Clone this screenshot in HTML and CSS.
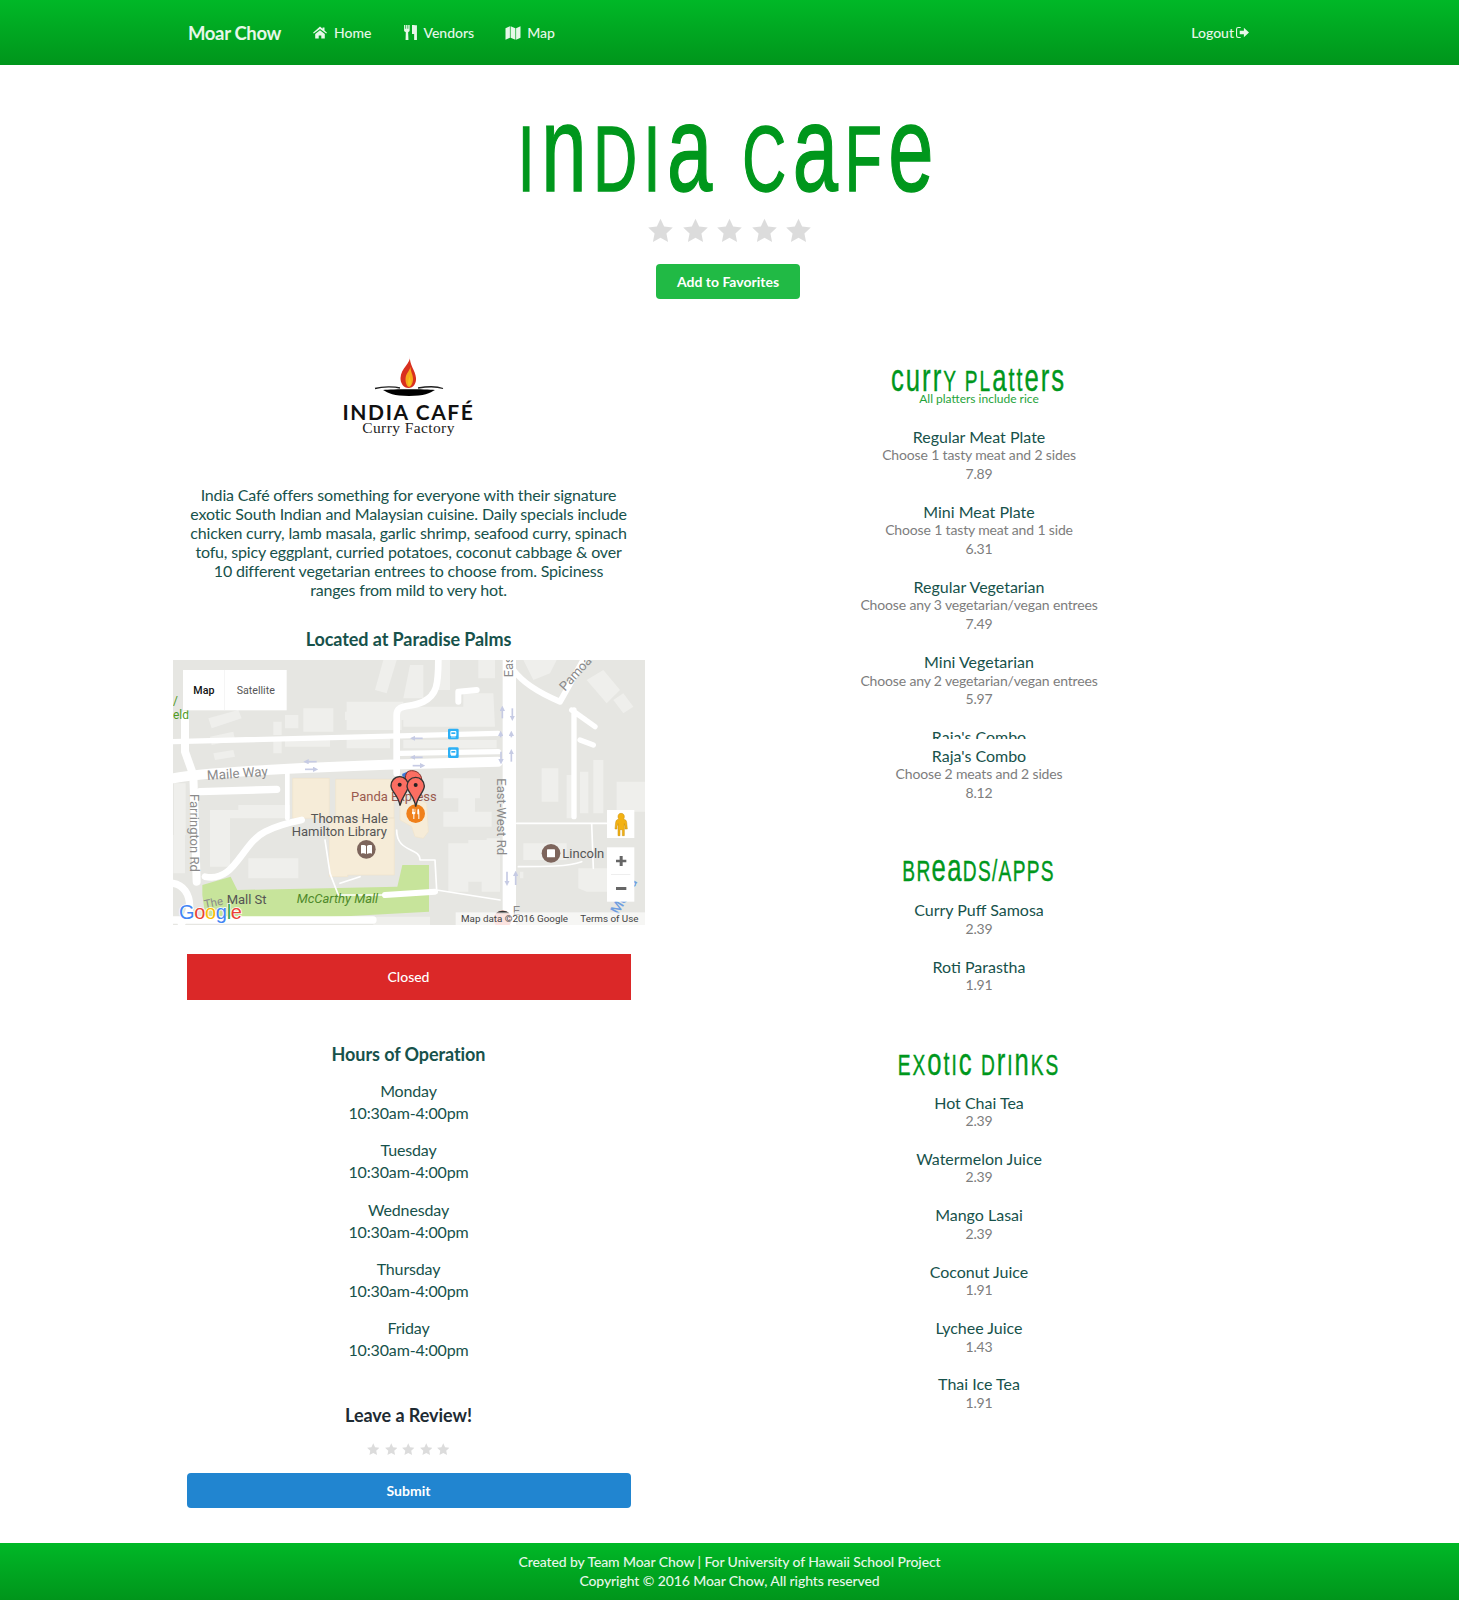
FILE: index.html
```html
<!DOCTYPE html>
<html lang="en">
<head>
<meta charset="utf-8">
<title>India Cafe</title>
<link rel="stylesheet" href="styles.css">
</head>
<body>
<svg class="defs" width="0" height="0" aria-hidden="true">
  <symbol id="star" viewBox="0 0 24 24"><path d="M12 .6l3.5 7.6 8.3 1-6.1 5.7 1.6 8.2L12 19l-7.3 4.1 1.6-8.2L.2 9.2l8.3-1z"/></symbol>
</svg>
<nav class="topbar">
  <a class="brand">Moar Chow</a>
  <a class="navlink nav-home"><svg class="ico" viewBox="0 0 14 12"><path d="M7 0l2.600 2.300V1h1.900v3l2.500 2.200-.8.9L7 2.600 .8 7.100 0 6.200zM2.200 7.400L7 3.800l4.800 3.600V12H8.300V8.900H5.700V12H2.200z"/></svg>Home</a>
  <a class="navlink nav-vendors"><svg class="ico ico-fork" viewBox="0 0 12 14"><path d="M0 0h1.200v3.400h.7V0h1.300v3.400h.7V0h1.300v5c0 .9-.6 1.500-1.400 1.700L4.100 14H1.400l.2-7.300C.7 6.500 0 5.900 0 5zM7.400 0C9.500 0 12 .3 12 .3V14H9.400V8.500h-2z"/></svg>Vendors</a>
  <a class="navlink nav-map"><svg class="ico ico-map" viewBox="0 0 15 14"><path d="M0 2.200L4.400.2v11.600L0 13.800zM5.100.2l4.800 2v11.600l-4.800-2zM10.600 2.200L15 .2v11.600l-4.400 2z"/></svg>Map</a>
  <a class="navlink nav-logout">Logout<svg class="ico ico-out" viewBox="0 0 14 12"><path d="M5 1.200H2.500C1.800 1.200 1.200 1.800 1.200 2.500v7c0 .7.6 1.300 1.300 1.300H5V12H2.500A2.500 2.500 0 0 1 0 9.500v-7A2.500 2.500 0 0 1 2.500 0H5zM8.500 1L14 6l-5.500 5V8H4V4h4.500z"/></svg></a>
</nav>

<header class="hero">
  <h1 class="disp title"><span class="squeeze">I<span class="lc">n</span>di<span class="lc">a</span> C<span class="lc">a</span>f<span class="lc">e</span></span></h1>
  <div class="stars stars-lg">
    <svg><use href="#star"/></svg><svg><use href="#star"/></svg><svg><use href="#star"/></svg><svg><use href="#star"/></svg><svg><use href="#star"/></svg>
  </div>
  <button class="btn btn-green btn-fav">Add to Favorites</button>
</header>

<main class="columns">
  <section class="col-left">
    <div class="logo">
      <svg class="logo-mark" viewBox="0 0 70 42">
        <path fill="#d9301f" d="M36 0c1 7-9 12-9.500 22-.2 5 3 10 8 10s8-5 7.500-10C41.500 14 35 9 36 0z"/>
        <path fill="#f6a81c" d="M36.500 9c.5 5-5 8-5 14 0 4 1.500 8 3.500 8s4-4 4-8c0-5-3-8-2.500-14z"/>
        <path fill="#f6c21c" d="M35.500 19c0 3-1.500 5-1.500 7.500 0 2 .5 3.500 1.500 3.500s1.500-2 1.500-3.500c0-2.500-1.500-4.500-1.500-7.500z"/>
        <path fill="none" stroke="#222" stroke-width="1.300" d="M1 32.500C10 30 22 31 26 32M44 32c6-1 18-2 25 .5"/>
        <path fill="#000" d="M9 34c10-1 42-1 52 0-5 3-11 6-26 6S14 37 9 34z"/>
      </svg>
      <div class="logo-name">INDIA CAFÉ</div>
      <div class="logo-sub">Curry Factory</div>
    </div>
    <p class="about">India Café offers something for everyone with their signature exotic South Indian and Malaysian cuisine. Daily specials include chicken curry, lamb masala, garlic shrimp, seafood curry, spinach tofu, spicy eggplant, curried potatoes, coconut cabbage &amp; over 10 different vegetarian entrees to choose from. Spiciness<br>ranges from mild to very hot.</p>
    <h3 class="located">Located at Paradise Palms</h3>

    <div class="map">
      <svg viewBox="9 30 1416 795" width="472" height="265">
        <defs>
          <marker id="arr" viewBox="0 0 10 10" refX="5" refY="5" markerWidth="3.200" markerHeight="3.200" orient="auto"><path d="M0 0l10 5-10 5z" fill="#c6cbe4"/></marker>
        </defs>
        <rect x="9" y="30" width="1416" height="795" fill="#e6e6e2"/>
        <g fill="#efefec">
          <path d="M640 30h40l-30 100-35-10zM720 45h40v100h-60zM800 30h40v90h-40zM925 30h50v55h-50zM1060 30h100l-20 40-50 20zM1250 90l50-30 50 60-40 40zM1330 150l30-20 30 40-30 20z"/>
          <path d="M530 155h170v30H530zM525 185h180v25H525zM530 210h165v30H530zM700 170h180v-40l90 0 5 100H700zM700 270h280v25H700zM530 265h130v30H530z"/>
          <path d="M400 175h90v70h-90zM345 195h40v40h-40zM310 215h25v40h-25zM115 205l90-25 10 25-90 30zM120 260l70-15 5 25-70 15zM130 310l60-10 5 20-60 10zM310 270h25v40h-25zM345 265h135v25H345z"/>
          <path d="M120 480h85v-15h155v40H180v145h-60zM235 625h150v60H235zM820 385h110v60h-15v40h50v45H820v-45h45v-40H820zM835 580h60v-10h55v-5h40v160h-55v-30h-40v30h-60z"/>
          <path d="M1060 580h130v50h-130zM1115 355h50v100h-50zM1190 375h25v130h-25zM1230 365h25v125h-25zM1270 330h30v160h-30zM1340 395h85v90h-85zM1225 655h125v70h-100l-25-10zM1060 685h-10v-20h10z"/>
          <path d="M12 400h35v155H12zM10 555h35v115H10zM610 800h170v25H610z"/>
        </g>
        <path fill="#c7e49b" d="M97 705l85-25 20 40 480-10 15-65h80v140l-550 30-120-10-10-70z"/>
        <g fill="#f6ecd8" stroke="#f0e4cb" stroke-width="2">
          <path d="M368 385h110v120H368zM497 388h175v115H497zM478 505h195v170H533v5h-55z"/>
          <path d="M690 460l60-10 20 10 5 85-15 20-25-5-10-30-35-20z"/>
        </g>
        <g fill="none" stroke="#fff" stroke-linecap="round" stroke-linejoin="round">
          <path stroke-width="30" d="M9 385c100-20 500-40 975-50"/>
          <path stroke-width="16" d="M9 275l975-25M690 310l295-5"/>
          <path stroke-width="20" d="M680 370V195c0-35 40-20 80-40s45-50 45-125"/>
          <path stroke-width="40" d="M1018 30v795"/>
          <path stroke-width="18" d="M1030 60c30 40 80 70 140 95l70-125"/>
          <path stroke-width="16" d="M1205 180l70 50M1212 180v320M1230 270l40 15"/>
          <path stroke-width="24" d="M45 195v110l25 70 10 320"/>
          <path stroke-width="22" d="M90 425l230-7"/>
          <path stroke-width="20" d="M105 680c90 20 110-100 180-135 30-15 60-25 110-35"/>
          <path stroke-width="14" d="M352 365v140"/>
          <path stroke-width="5" d="M1040 520h270M1265 520l5 135M1045 650c80 0 150 0 190-15M465 570l15 100 25 65h135M680 540c0 70 70 50 70 90h45l5 90M510 700l60-20M800 720l190 30"/>
          <path stroke-width="18" d="M645 735l150-10M920 120l-55 5v30"/>
          <path stroke-width="22" d="M9 700c30 5 50 30 50 70 0 20-10 35-25 50M9 810h600"/>
        </g>
        <g fill="none" stroke="#c6cbe4" stroke-width="5" marker-end="url(#arr)">
          <path d="M440 335h-32"/><path d="M405 358h32"/><path d="M758 265h-30"/><path d="M758 322h-30"/><path d="M728 347h30"/>
          <path d="M997 205v-30"/><path d="M1027 175v30"/><path d="M992 262v-12"/><path d="M1024 262v-12"/><path d="M993 305v30"/><path d="M1024 335v-30"/><path d="M1011 665v35"/><path d="M1037 705v-35"/>
        </g>
        <text transform="rotate(-4 112 390)" x="112" y="390" class="m-lbl">Maile Way</text>
        <text transform="rotate(90 60 432)" x="60" y="432" class="m-lbl m-sm">Farrington Rd</text>
        <text transform="rotate(90 980 385)" x="980" y="385" class="m-lbl m-sm">East-West Rd</text>
        <text transform="rotate(-48 1185 125)" x="1185" y="125" class="m-lbl m-sm">Pamoa</text>
        <text transform="rotate(-90 1028 82)" x="1028" y="82" class="m-lbl m-sm">Eas</text>
        <text x="1028" y="795" class="m-lbl m-sm">E</text>
        <text x="170" y="763" class="m-dark">Mall St</text>
        <text transform="rotate(-12 105 775)" x="105" y="775" class="m-lbl m-xs">The</text>
        <text x="543" y="452" class="m-brown">Panda Express</text>
        <text x="422" y="520" class="m-dark">Thomas Hale</text>
        <text x="365" y="558" class="m-dark">Hamilton Library</text>
        <text x="1177" y="624" class="m-dark">Lincoln</text>
        <text x="380" y="760" class="m-green">McCarthy Mall</text>
        <text x="9" y="207" class="m-eld">eld</text>
        <text x="9" y="165" class="m-eld">/</text>

        <circle cx="589" cy="598" r="28" fill="#7d655c"/>
        <path fill="#fff" d="M573 586c5-2 12-2 15 2v24c-4-3-10-3-15-1zM591 588c3-4 10-4 15-2v25c-5-2-11-2-15 1z"/>
        <circle cx="1143" cy="610" r="28" fill="#7d655c"/>
        <rect x="1131" y="598" width="24" height="24" rx="2" fill="#fff"/>
        <circle cx="737" cy="491" r="28" fill="#f0801a"/>
        <path fill="#fff" d="M726 476h2v10h2v-10h2v10h2v-10h2v14c0 2-2 3-3 3v14h-3v-14c-2 0-4-1-4-3zM744 476c3 0 4 6 4 14v17h-3v-14h-3v-8c0-5 1-9 2-9z"/>

        <g>
          <rect x="834" y="236" width="32" height="32" rx="4" fill="#2cb0f5"/>
          <rect x="841" y="243" width="18" height="16" rx="3" fill="#fff"/><rect x="844" y="247" width="12" height="5" fill="#2cb0f5"/><rect x="843" y="260" width="14" height="2" fill="#fff"/>
          <rect x="834" y="292" width="32" height="32" rx="4" fill="#2cb0f5"/>
          <rect x="841" y="299" width="18" height="16" rx="3" fill="#fff"/><rect x="844" y="303" width="12" height="5" fill="#2cb0f5"/><rect x="843" y="316" width="14" height="2" fill="#fff"/>
        </g>

        <path fill="#3d78d8" d="M695 375c15-15 40-15 50 0l-20 30z"/>
        <path fill="#fb6e62" stroke="#7c2b25" stroke-width="3" d="M725 362c20 0 32 15 30 32-2 14-14 22-18 60-4-35-25-40-30-60-2-17 0-32 18-32z"/>
        <path fill="#fb6e62" stroke="#333" stroke-width="4" d="M689 380c16 0 26 14 26 27 0 18-18 28-25 60-5-32-27-42-27-60 0-13 10-27 26-27z"/>
        <path fill="#fb6e62" stroke="#333" stroke-width="4" d="M737 382c15 0 26 12 26 26 0 18-20 28-26 62-4-34-26-44-26-62 0-14 11-26 26-26z"/>
        <circle cx="689" cy="404" r="6" fill="#222"/>
        <circle cx="737" cy="405" r="6" fill="#222"/>
        <circle cx="998" cy="808" r="27" fill="#f3b5ad"/>
        <path fill="#333" d="M978 790c10-10 30-10 40 0z"/>

        <g>
          <text transform="rotate(-60 1345 795)" x="1345" y="795" class="m-blue">Mc   oa</text>
          <rect x="39" y="60" width="311" height="121" fill="#fff"/>
          <rect x="162" y="60" width="2" height="121" fill="#f0f0f0"/>
          <text x="70" y="131" class="m-ctl m-b">Map</text>
          <text x="200" y="131" class="m-ctl">Satellite</text>
          <rect x="1311" y="480" width="82" height="84" fill="#fff"/>
          <path fill="#f3b213" stroke="#c78d0c" stroke-width="1.500" d="M1353 490c7 0 10 5 10 10s-2 6-3 7c6 1 9 4 10 10l2 20h-7v-8l-2-8v36h-6v-18h-7v18h-6v-36l-3 8v8h-6l2-20c1-6 4-9 10-10-1-1-3-3-3-7 0-5 3-10 9-10z"/>
          <rect x="1311" y="592" width="82" height="163" fill="#fff"/>
          <rect x="1323" y="673" width="58" height="2" fill="#e6e6e6"/>
          <path fill="#666" d="M1349 618h9v11h11v8h-11v11h-9v-11h-11v-8h11zM1338 711h31v9h-31z"/>
          <rect x="857" y="787" width="568" height="38" fill="#fff" fill-opacity=".62"/>
          <text x="873" y="816" class="m-attr">Map data ©2016 Google</text>
          <text x="1231" y="816" class="m-attr">Terms of Use</text>
          <text x="27" y="806" class="m-goog"><tspan fill="#4285f4">G</tspan><tspan fill="#ea4335">o</tspan><tspan fill="#fbbc05">o</tspan><tspan fill="#4285f4">g</tspan><tspan fill="#34a853">l</tspan><tspan fill="#ea4335">e</tspan></text>
        </g>
      </svg>
    </div>

    <div class="status">Closed</div>

    <h3 class="hours-title">Hours of Operation</h3>
    <div class="hours">
      <div class="day"><div>Monday</div><div>10:30am-4:00pm</div></div>
      <div class="day"><div>Tuesday</div><div>10:30am-4:00pm</div></div>
      <div class="day"><div>Wednesday</div><div>10:30am-4:00pm</div></div>
      <div class="day"><div>Thursday</div><div>10:30am-4:00pm</div></div>
      <div class="day"><div>Friday</div><div>10:30am-4:00pm</div></div>
    </div>

    <h3 class="review-title">Leave a Review!</h3>
    <div class="stars stars-sm">
      <svg><use href="#star"/></svg><svg><use href="#star"/></svg><svg><use href="#star"/></svg><svg><use href="#star"/></svg><svg><use href="#star"/></svg>
    </div>
    <button class="btn btn-blue">Submit</button>
  </section>

  <section class="col-right">
    <h2 class="disp menu-head head-curry"><span class="squeeze"><span class="lc">c</span><span class="lc">u</span><span class="lc">r</span><span class="lc">r</span>y Pl<span class="lc">a</span><span class="lc-t">t</span><span class="lc-t">t</span><span class="lc">e</span><span class="lc">r</span><span class="lc">s</span></span></h2>
    <div class="menu-note">All platters include rice</div>

    <div class="items items-curry">
      <div class="item"><div class="name">Regular Meat Plate</div><div class="desc">Choose 1 tasty meat and 2 sides</div><div class="desc">7.89</div></div>
      <div class="item"><div class="name">Mini Meat Plate</div><div class="desc">Choose 1 tasty meat and 1 side</div><div class="desc">6.31</div></div>
      <div class="item"><div class="name">Regular Vegetarian</div><div class="desc">Choose any 3 vegetarian/vegan entrees</div><div class="desc">7.49</div></div>
      <div class="item"><div class="name">Mini Vegetarian</div><div class="desc">Choose any 2 vegetarian/vegan entrees</div><div class="desc">5.97</div></div>
      <div class="item item-cut"><div class="name">Raja's Combo</div></div>
      <div class="item"><div class="name">Raja's Combo</div><div class="desc">Choose 2 meats and 2 sides</div><div class="desc">8.12</div></div>
    </div>

    <h2 class="disp menu-head head-breads"><span class="squeeze">Br<span class="lc">e</span><span class="lc">a</span>ds/Apps</span></h2>
    <div class="items items-breads">
      <div class="item"><div class="name">Curry Puff Samosa</div><div class="desc">2.39</div></div>
      <div class="item"><div class="name">Roti Parastha</div><div class="desc">1.91</div></div>
    </div>

    <h2 class="disp menu-head head-drinks"><span class="squeeze">Ex<span class="lc">o</span><span class="lc-t">t</span>i<span class="lc">c</span> D<span class="lc">r</span>i<span class="lc">n</span>ks</span></h2>
    <div class="items items-drinks">
      <div class="item"><div class="name">Hot Chai Tea</div><div class="desc">2.39</div></div>
      <div class="item"><div class="name">Watermelon Juice</div><div class="desc">2.39</div></div>
      <div class="item"><div class="name">Mango Lasai</div><div class="desc">2.39</div></div>
      <div class="item"><div class="name">Coconut Juice</div><div class="desc">1.91</div></div>
      <div class="item"><div class="name">Lychee Juice</div><div class="desc">1.43</div></div>
      <div class="item"><div class="name">Thai Ice Tea</div><div class="desc">1.91</div></div>
    </div>
  </section>
</main>

<footer class="foot">
  <div>Created by Team Moar Chow | For University of Hawaii School Project</div>
  <div>Copyright © 2016 Moar Chow, All rights reserved</div>
</footer>
</body>
</html>
```

FILE: styles.css
```css
* { box-sizing: border-box; }
html, body { margin: 0; padding: 0; }
body {
  font-family: Lato, "Noto Sans", sans-serif;
  font-size: 16px;
  color: #17524b;
  background: #fff;
  width: 1459px;
  height: 1600px;
  overflow: hidden;
  display: flex;
  flex-direction: column;
}
.defs { position: absolute; }

/* nav + footer */
.topbar {
  height: 65px;
  background: linear-gradient(#00b827, #00951b);
  display: flex;
  align-items: center;
  padding-left: 188px;
  color: #e6f7e9;
  font-size: 14px;
  font-weight: 500;
  flex: none;
}
.brand { font-size: 18.500px; font-weight: 700; width: 125px; letter-spacing: -.35px; }
.navlink { display: flex; align-items: center; }
.ico { fill: currentColor; width: 14px; height: 13px; margin-right: 7px; }
.nav-vendors { margin-left: 33px; }
.nav-map { margin-left: 31px; }
.ico-fork { width: 13px; height: 15px; margin-right: 6px; }
.ico-map { width: 16px; height: 14px; margin-right: 6px; }
.nav-logout { margin-left: auto; margin-right: 210px; }
.ico-out { width: 13px; margin: 0 0 0 2px; }
.foot {
  flex: none;
  height: 57px;
  margin-top: auto;
  background: linear-gradient(#00b827, #00951b);
  color: #e6f7e9;
  text-align: center;
  font-size: 14px;
  font-weight: 500;
  letter-spacing: -.1px;
  line-height: 19px;
  padding-top: 9px;
}

/* display face */
.disp {
  font-family: "Liberation Sans Narrow", "Liberation Sans", sans-serif;
  font-weight: 400;
  text-transform: uppercase;
  color: #00971c;
  text-align: center;
  margin: 0;
  white-space: nowrap;
}
.lc { text-transform: none; font-size: 1.340em; line-height: 0; }
.lc-t { text-transform: none; font-size: 1.120em; line-height: 0; }
.squeeze { display: inline-block; transform: scaleX(.66); }

.hero { text-align: center; flex: none; }
.title { font-size: 92px; line-height: 76px; letter-spacing: 10px; margin-top: 56px; height: 76px; -webkit-text-stroke: 1.500px #00971c; }

.stars { display: flex; justify-content: center; }
.stars svg { fill: #dcdcdc; }
.stars-lg { gap: 9.500px; margin-top: 21px; }
.stars-lg svg { width: 25px; height: 25px; }
.stars-sm { gap: 5px; margin-top: 17px; }
.stars-sm svg { width: 12.500px; height: 12.500px; }

.btn {
  font-family: inherit;
  font-size: 14px;
  font-weight: 700;
  color: #fff;
  border: 0;
  border-radius: 4px;
  height: 35px;
  display: block;
}
.btn-green { background: #21ba45; }
.btn-fav { width: 144px; margin: 21px 0 0 656px; }
.btn-blue { background: #2185d0; width: 444px; margin: 17px auto 0; }

/* columns */
.columns {
  display: grid;
  grid-template-columns: 472px 473px;
  column-gap: 98px;
  margin-left: 172.500px;
  flex: none;
  text-align: center;
}

.logo { margin-top: 57px; height: 95px; display: flex; flex-direction: column; align-items: center; }
.logo-mark { width: 70px; height: 42px; }
.logo-name { font-size: 21px; font-weight: 700; color: #111; letter-spacing: 1.600px; line-height: 20px; margin-top: 4px; }
.logo-sub { font-family: "Liberation Serif", serif; font-size: 15.500px; color: #222; line-height: 14px; letter-spacing: .4px; margin-top: -1px; }

.about { font-size: 16px; letter-spacing: -.17px; line-height: 19px; margin: 34px auto 0; width: 442px; }
.located { font-size: 18px; font-weight: 700; letter-spacing: -.08px; line-height: 22px; margin: 29px 0 0; }
.map { height: 265px; width: 472px; margin-top: 10px; overflow: hidden; }
.map svg { display: block; }
.m-lbl { font: 40px Roboto, sans-serif; fill: #8b8b8b; }
.m-sm { font-size: 39px; }
.m-xs { font-size: 34px; }
.m-dark { font: 39px Roboto, sans-serif; fill: #555; }
.m-brown { font: 39px Roboto, sans-serif; fill: #9a5a4e; }
.m-green { font: italic 39px Roboto, sans-serif; fill: #4f8a2a; }
.m-eld { font: 36px Roboto, sans-serif; fill: #4f9a1f; }
.m-blue { font: 500 42px Roboto, sans-serif; fill: #6e9de0; }
.m-ctl { font: 32px Roboto, sans-serif; fill: #565656; }
.m-b { font-weight: 500; fill: #111; }
.m-attr { font: 29.500px Roboto, sans-serif; fill: #444; }
.m-goog { font: 400 60px "Liberation Sans", sans-serif; letter-spacing: -1px; paint-order: stroke; stroke: #fff; stroke-width: 5px; }

.status {
  background: #db2828;
  color: #fff;
  font-size: 14px;
  font-weight: 500;
  width: 444px;
  height: 46px;
  line-height: 46px;
  margin: 29px auto 0;
}
.hours-title { font-size: 18px; font-weight: 700; letter-spacing: -.08px; line-height: 22px; margin: 43px 0 0; }
.hours { margin-top: 15px; letter-spacing: -.15px; }
.day { line-height: 22px; margin-bottom: 15.300px; }
.review-title { font-size: 18px; font-weight: 700; letter-spacing: -.05px; line-height: 22px; color: #1e2b33; margin: 43px 0 0; }

/* menu */
.menu-head { font-size: 29px; letter-spacing: 3px; line-height: 22px; -webkit-text-stroke: .4px #00971c; }
.head-curry { margin-top: 71px; }
.menu-note { font-size: 12px; line-height: 14px; color: #1fa33a; }
.item { margin-bottom: 18.100px; }
.name { line-height: 19.500px; }
.desc { font-size: 14px; letter-spacing: -.15px; line-height: 18.800px; color: #7d7d7d; }
.items-curry { margin-top: 20.500px; }
.item-cut { height: 12px; overflow: hidden; margin-bottom: 6.500px; }
.head-breads { margin-top: 57.500px; letter-spacing: 2px; }
.items-breads { margin-top: 18px; }
.head-drinks { margin-top: 59px; }
.items-drinks { margin-top: 16.500px; }
```
